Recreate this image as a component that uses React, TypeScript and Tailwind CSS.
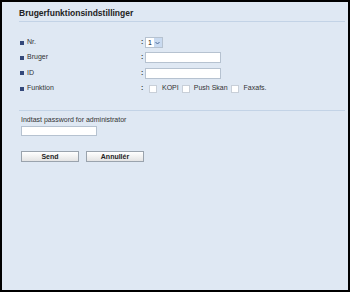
import React from "react";

const Row = ({ label, children, h = "h-[15px]" }: { label: string; children: React.ReactNode; h?: string }) => (
  <div className={`flex ${h} items-center`}>
    <div className="flex w-[122px] items-center">
      <span className="mr-[3px] ml-[1px] inline-block h-[4px] w-[4px] bg-[#34487a]" />
      <span className="text-[7px] text-[#333]">{label}</span>
    </div>
    <span className="w-[4px] text-[7px] font-bold text-[#333]">:</span>
    {children}
  </div>
);

const Check = () => (
  <span className="inline-block h-[8px] w-[8px] border border-[#c8cfd8] bg-white" />
);

export default function App() {
  return (
    <div
      className="h-[292px] w-[350px] border-2 border-black bg-[#dfe8f3] pl-[17px] pr-[3px]"
      style={{ fontFamily: '"Liberation Sans", Arial, sans-serif' }}
    >
      <div className="border-b border-[#c3d3e6] pt-[6px] pb-[3px] text-[8.5px] font-bold leading-[10px] text-[#222]">
        Brugerfunktionsindstillinger
      </div>
      <div className="mt-[13px]">
        <Row label="Nr.">
          <div className="flex h-[11px] items-center border border-[#b6c2d0] bg-white">
            <span className="px-[2px] text-[7px] leading-none text-[#111]">1</span>
            <span className="flex h-full w-[8px] items-center justify-center bg-[#c9daf0]">
              <svg width="5" height="4" viewBox="0 0 5 4">
                <path d="M0.5 1 L2.5 3 L4.5 1" fill="none" stroke="#4a6a9a" strokeWidth="1" />
              </svg>
            </span>
          </div>
        </Row>
        <Row label="Bruger">
          <div className="h-[11px] w-[76px] border border-[#b6c2d0] bg-white" />
        </Row>
        <Row label="ID" h="h-[16px]">
          <div className="h-[11px] w-[76px] border border-[#b6c2d0] bg-white" />
        </Row>
        <Row label="Funktion">
          <div className="ml-[4px] flex items-center text-[7px] text-[#333]">
            <Check />
            <span className="ml-[5px] mr-[3px]">KOPI</span>
            <Check />
            <span className="ml-[4px] mr-[3px]">Push Skan</span>
            <Check />
            <span className="ml-[5px]">Faxafs.</span>
          </div>
        </Row>
      </div>
      <div className="mt-[14px] border-t border-[#c3d3e6] pt-[4px] pl-[2px]">
        <div className="text-[7px] leading-[9px] text-[#333]">Indtast password for administrator</div>
        <div className="mt-[2px] h-[10px] w-[76px] border border-[#b6c2d0] bg-white" />
        <div className="mt-[15px] flex gap-[7px]">
          <button className="h-[11px] w-[58px] border border-[#9aa3ad] bg-gradient-to-b from-white to-[#e4e4e4] text-[7px] font-bold leading-none text-[#222]">
            Send
          </button>
          <button className="h-[11px] w-[58px] border border-[#9aa3ad] bg-gradient-to-b from-white to-[#e4e4e4] text-[7px] font-bold leading-none text-[#222]">
            Annullér
          </button>
        </div>
      </div>
    </div>
  );
}
